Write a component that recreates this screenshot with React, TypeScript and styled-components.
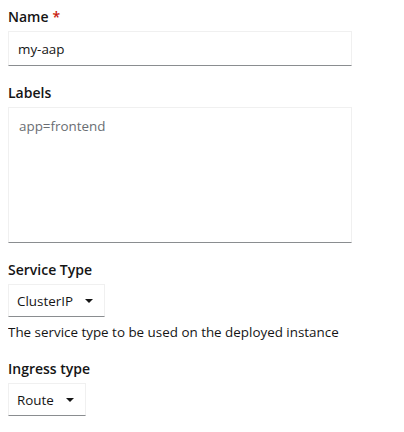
import React from 'react'
import styled, { createGlobalStyle } from 'styled-components'

const Global = createGlobalStyle`
  body {
    margin: 8px;
    background: #fff;
    font-family: 'Open Sans', 'Liberation Sans', sans-serif;
    color: #151515;
  }
`

const Form = styled.form`
  display: flex;
  flex-direction: column;
  width: 344px;
`

const Group = styled.div<{ $gap?: number }>`
  display: flex;
  flex-direction: column;
  margin-bottom: ${({ $gap }) => $gap ?? 18}px;
`

const Label = styled.label`
  font-size: 14px;
  font-weight: 600;
  line-height: 18px;
  padding-bottom: 5px;
`

const Required = styled.span`
  color: #c9190b;
  margin-left: 4px;
`

const TextInput = styled.input`
  box-sizing: border-box;
  height: 35px;
  width: 100%;
  padding: 0 9px;
  font: inherit;
  font-size: 13.4px;
  color: #151515;
  border: 1px solid #f0f0f0;
  border-bottom-color: #8a8d90;
  outline: none;
`

const TextArea = styled.textarea`
  box-sizing: border-box;
  height: 136px;
  width: 100%;
  padding: 8px 10px;
  font: inherit;
  font-size: 13.4px;
  line-height: 21px;
  color: #151515;
  border: 1px solid #f0f0f0;
  border-bottom-color: #8a8d90;
  outline: none;
  resize: none;
  &::placeholder {
    color: #6a6e73;
  }
`

const Select = styled.button`
  align-self: flex-start;
  box-sizing: border-box;
  display: flex;
  align-items: center;
  gap: 12px;
  height: 33px;
  padding: 0 11px 0 8px;
  background: #fff;
  font: inherit;
  font-size: 13.4px;
  color: #151515;
  border: 1px solid #f0f0f0;
  border-bottom-color: #8a8d90;
  cursor: pointer;
`

const Caret = styled.span`
  width: 0;
  height: 0;
  border-left: 4px solid transparent;
  border-right: 4px solid transparent;
  border-top: 4px solid #151515;
`

const Helper = styled.div`
  font-size: 13.4px;
  line-height: 21px;
  margin-top: 5px;
  white-space: nowrap;
`

export default function App() {
  return (
    <>
      <Global />
      <Form onSubmit={e => e.preventDefault()}>
        <Group>
          <Label>
            Name<Required>*</Required>
          </Label>
          <TextInput defaultValue="my-aap" />
        </Group>
        <Group>
          <Label>Labels</Label>
          <TextArea placeholder="app=frontend" />
        </Group>
        <Group $gap={17}>
          <Label>Service Type</Label>
          <Select type="button">
            ClusterIP
            <Caret />
          </Select>
          <Helper>The service type to be used on the deployed instance</Helper>
        </Group>
        <Group>
          <Label>Ingress type</Label>
          <Select type="button">
            Route
            <Caret />
          </Select>
        </Group>
      </Form>
    </>
  )
}
